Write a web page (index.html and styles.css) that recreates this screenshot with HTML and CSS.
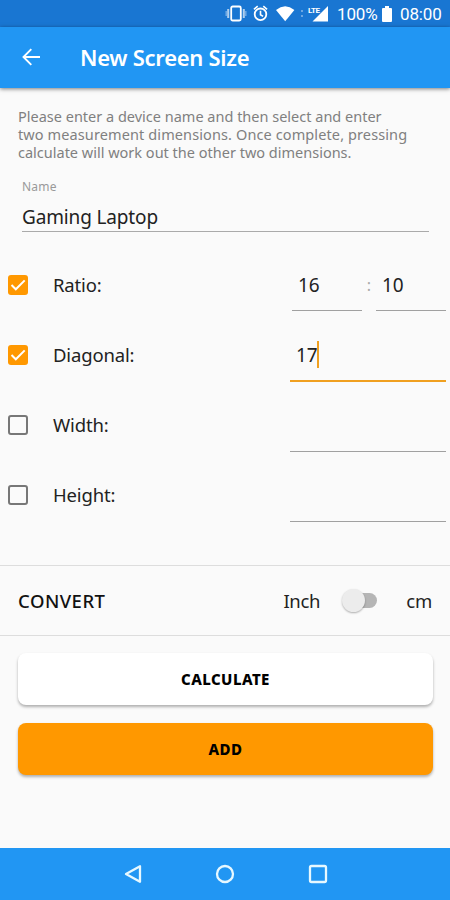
FILE: index.html
```html
<!DOCTYPE html>
<html lang="en">
<head>
<meta charset="utf-8">
<title>New Screen Size</title>
<link rel="stylesheet" href="styles.css">
</head>
<body>
<div class="screen">
  <div class="status">
    <svg class="status-icons" width="104" height="27" viewBox="0 0 104 27" fill="none" stroke="#fff">
      <rect x="6.2" y="6.500" width="9.600" height="14" rx="1.500" stroke-width="1.800"/>
      <path d="M3.200 9v9M18.800 9v9" stroke-opacity=".65" stroke-width="2"/>
      <path d="M1.200 11v5M20.800 11v5" stroke-opacity=".4" stroke-width="1.400"/>
      <circle cx="35.500" cy="14.300" r="5.800" stroke-width="1.800"/>
      <path d="M35.500 10.800v4l2.600 1.600M28.900 9.300l3.800-3.200M42.100 9.300l-3.800-3.200" stroke-width="1.600"/>
      <path d="M51 10q9.200-7.300 18.400 0L60.200 21.300z" fill="#fff" stroke="none"/>
      <path d="M77 10v2M77 15v2" stroke-opacity=".45" stroke-width="1.600"/>
      <path d="M103 6v15.500H87.500z" fill="#fff" stroke="none"/>
      <text class="lte" x="83" y="12.500">LTE</text>
    </svg>
    <span class="percent">100%</span>
    <svg class="battery" width="10" height="16" viewBox="0 0 10 16"><path d="M3 0h4v2h2q1 0 1 1v12q0 1-1 1H1q-1 0-1-1V3q0-1 1-1h2z" fill="#fff"/></svg>
    <span class="time">08:00</span>
  </div>
  <header class="appbar">
    <svg width="18" height="18" viewBox="0 0 18 18" fill="none" stroke="#fff" stroke-width="1.900"><path d="M18 9H1.800M9.300 1.200L1.500 9l7.800 7.800"/></svg>
    <h1>New Screen Size</h1>
  </header>
  <main>
    <p class="intro"><span>Please enter a device name and then select and enter</span><span class="loose">two measurement dimensions. Once complete, pressing</span><span>calculate will work out the other two dimensions.</span></p>
    <div class="name-field">
      <div class="caption">Name</div>
      <div class="name">Gaming Laptop</div>
    </div>
    <div class="rows">
      <div class="row">
        <span class="check on"><svg width="20" height="20" viewBox="0 0 20 20" fill="none" stroke="#fff" stroke-width="2"><path d="M3.500 10l4.300 4.300L16.700 5.400"/></svg></span>
        <span class="label">Ratio:</span>
        <div class="ratio"><div class="input">16</div><span class="colon">:</span><div class="input">10</div></div>
      </div>
      <div class="row">
        <span class="check on"><svg width="20" height="20" viewBox="0 0 20 20" fill="none" stroke="#fff" stroke-width="2"><path d="M3.500 10l4.300 4.300L16.700 5.400"/></svg></span>
        <span class="label">Diagonal:</span>
        <div class="input wide active">17<i class="caret"></i></div>
      </div>
      <div class="row">
        <span class="check"></span><span class="label">Width:</span><div class="input wide"></div>
      </div>
      <div class="row">
        <span class="check"></span><span class="label">Height:</span><div class="input wide"></div>
      </div>
    </div>
    <div class="convert">
      <span class="convert-title">CONVERT</span>
      <span class="inch">Inch</span>
      <span class="switch"><i class="thumb"></i></span>
      <span class="cm">cm</span>
    </div>
    <div class="actions">
      <div class="button calculate">CALCULATE</div>
      <div class="button add">ADD</div>
    </div>
  </main>
  <nav class="navbar">
    <svg width="18" height="20" viewBox="0 0 18 20"><path d="M16 2.200v15.600L2 10z"/></svg>
    <svg width="20" height="20" viewBox="0 0 20 20"><circle cx="10" cy="10" r="8"/></svg>
    <svg width="20" height="20" viewBox="0 0 20 20"><rect x="2" y="2" width="16" height="16" rx="1.500"/></svg>
  </nav>
</div>
</body>
</html>
```
FILE: styles.css
```css
* { box-sizing: border-box; }
body { margin: 0; font-family: "Noto Sans", sans-serif; color: #222; background: #fafafa; }
svg { display: block; flex: none; }
.screen { width: 450px; height: 900px; display: flex; flex-direction: column; overflow: hidden; }
.status { height: 27px; flex: none; background: #1976d2; color: #fff; display: flex; align-items: center; padding-left: 225px; font: 17px/27px Roboto, sans-serif; white-space: nowrap; }
.lte { font: bold 8px Roboto, sans-serif; fill: #fff; stroke: none; letter-spacing: -.5px; }
.percent { width: 45px; margin: 1px 0 0 8px; letter-spacing: -.15px; }
.time { margin: 1px 0 0 8px; letter-spacing: -.15px; }
.appbar { height: 61px; flex: none; background: #2196f3; color: #fff; display: flex; align-items: center; padding: 0 0 1px 22px; box-shadow: 0 1px 4px rgba(0,0,0,.5); z-index: 1; }
h1 { margin: 0 0 0 40px; font-size: 22px; font-weight: 600; line-height: 30px; letter-spacing: -.28px; white-space: nowrap; }
main { flex: 1; min-height: 0; }
.intro { margin: 19px 0 0 18px; font-size: 14.5px; line-height: 18px; color: #808080; white-space: nowrap; }
.intro span { display: block; }
.intro .loose { letter-spacing: .11px; }
.name-field { margin: 17px 21px 0 22px; height: 54px; border-bottom: 1px solid #aaa; }
.caption { font-size: 12px; line-height: 18px; color: #999; letter-spacing: .2px; }
.name { margin-top: 8px; font-size: 19px; line-height: 26px; letter-spacing: -.15px; }
.rows { margin-top: 18px; }
.row { height: 70px; display: flex; align-items: center; padding: 0 4px 0 8px; }
.check { width: 20px; height: 20px; border: 2px solid #777; border-radius: 3px; flex: none; }
.check.on { border: 0; background: #ff9800; }
.label { margin-left: 25px; font-size: 18.5px; line-height: 26px; letter-spacing: -.15px; flex: 1; }
.ratio { width: 154px; display: flex; justify-content: space-between; }
.input { position: relative; width: 70px; height: 51px; border-bottom: 1px solid #a0a0a0; padding: 12px 6px; font-size: 19px; line-height: 26px; }
.wide { width: 156px; height: 53px; padding-top: 13px; }
.active { border-bottom: 2px solid #f0a020; }
.caret { position: absolute; left: 27px; top: 12px; width: 2px; height: 27px; background: #f0a020; }
.colon { font-size: 16px; line-height: 50px; color: #aaa; }
.convert { height: 71px; margin-top: 35px; border-top: 1px solid #ddd; border-bottom: 1px solid #ddd; display: flex; align-items: center; padding: 0 18px 1px 18px; font-size: 18.5px; }
.convert-title { flex: 1; font-weight: 500; letter-spacing: .5px; color: #111; }
.inch { letter-spacing: -.3px; }
.cm { letter-spacing: -.2px; }
.switch { position: relative; width: 28px; height: 15px; margin: 0 29px 0 29px; border-radius: 8px; background: #b5b5b5; }
.thumb { position: absolute; left: -7px; top: -4px; width: 23px; height: 23px; border-radius: 50%; background: #ececec; box-shadow: 0 1px 2px rgba(0,0,0,.3); }
.actions { padding: 17px 17px 0 18px; display: grid; gap: 18px; }
.button { height: 52px; border-radius: 8px; display: flex; align-items: center; justify-content: center; font-size: 15px; font-weight: 800; letter-spacing: .45px; color: #000; box-shadow: 0 2px 3px rgba(0,0,0,.3); }
.calculate { background: #fff; }
.add { background: #ff9800; }
.navbar { height: 52px; flex: none; background: #2196f3; display: flex; align-items: center; justify-content: center; gap: 73px; padding-left: 1px; fill: none; stroke: #e6f8ff; stroke-width: 2.3; stroke-linejoin: round; }
```
